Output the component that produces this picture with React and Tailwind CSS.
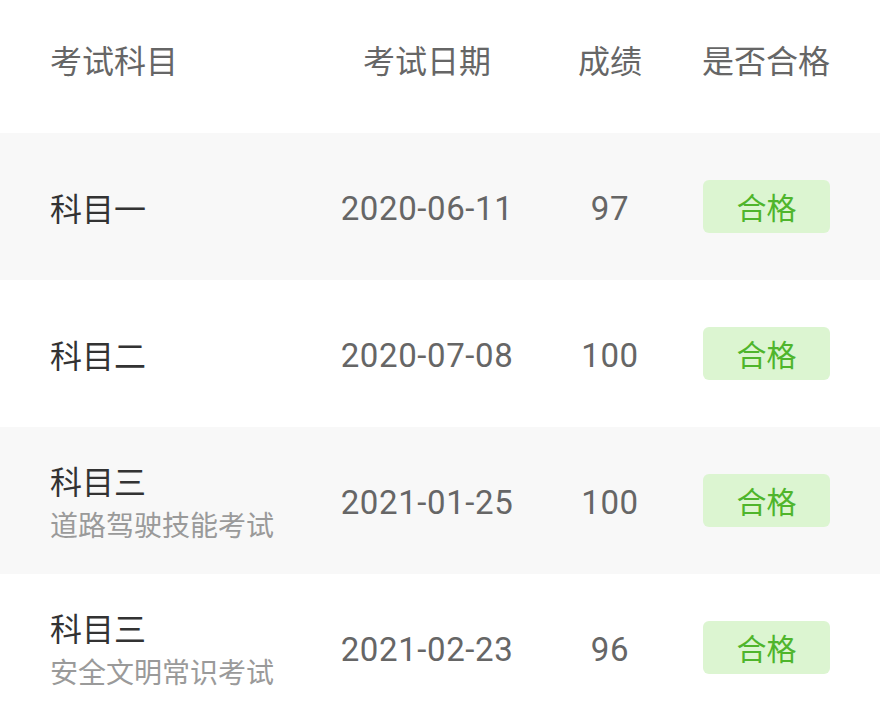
import React from 'react';

const rows = [
  { name: '科目一', date: '2020-06-11', score: '97' },
  { name: '科目二', date: '2020-07-08', score: '100' },
  { name: '科目三', sub: '道路驾驶技能考试', date: '2021-01-25', score: '100' },
  { name: '科目三', sub: '安全文明常识考试', date: '2021-02-23', score: '96' },
];

const cjk = "font-['Noto_Sans_CJK_SC',sans-serif]";
const num = "font-['Roboto','Noto_Sans_CJK_SC',sans-serif]";

function App() {
  return (
    <div className={`w-[880px] h-[720px] bg-white overflow-hidden ${cjk}`}>
      <div className="grid grid-cols-[270px_214px_152px_144px] px-[50px] h-[133px] items-center pb-4 text-[32px] text-[#666] leading-none">
        <div>考试科目</div>
        <div className="text-center">考试日期</div>
        <div className="text-center">成绩</div>
        <div className="flex justify-end">
          <span className="w-[128px] text-center">是否合格</span>
        </div>
      </div>

      {rows.map((r, i) => (
        <div
          key={i}
          className={`grid grid-cols-[270px_214px_152px_144px] px-[50px] h-[147px] items-center ${i % 2 === 0 ? 'bg-[#f8f8f8]' : 'bg-white'}`}
        >
          <div className="flex flex-col">
            <span className="text-[32px] leading-[44px] text-[#333]">{r.name}</span>
            {r.sub && <span className="text-[28px] leading-[40px] mt-0.5 text-[#9a9a9a]">{r.sub}</span>}
          </div>
          <div className={`pt-1 text-center text-[33px] tracking-[0.6px] text-[#666] ${num}`}>{r.date}</div>
          <div className={`pt-1 text-center text-[33px] tracking-[0.6px] text-[#666] ${num}`}>{r.score}</div>
          <div className="flex justify-end">
            <span className="w-[127px] h-[53px] rounded-md bg-[#dcf5d1] text-[#4fb52c] text-[30px] flex items-center justify-center">
              合格
            </span>
          </div>
        </div>
      ))}
    </div>
  );
}

export default App;
